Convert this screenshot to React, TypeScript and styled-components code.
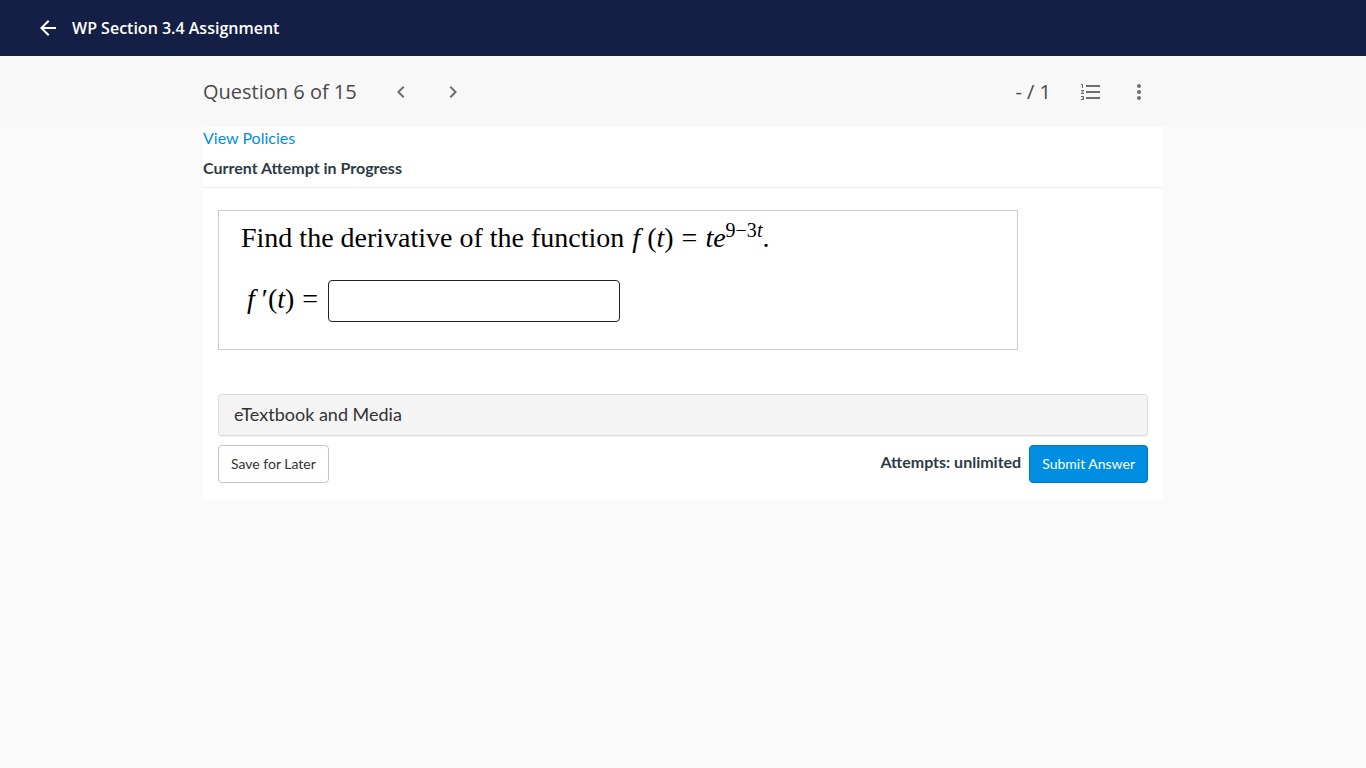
import React from "react";
import styled, { createGlobalStyle } from "styled-components";
import {
  MdArrowBack,
  MdChevronLeft,
  MdChevronRight,
  MdFormatListNumbered,
  MdMoreVert,
} from "react-icons/md";

const GlobalStyle = createGlobalStyle`
  *, *::before, *::after { box-sizing: border-box; }
  body {
    margin: 0;
    background: #fafafa;
    color: #2d3b45;
    font-family: Lato, "Liberation Sans", sans-serif;
    font-size: 16px;
    line-height: 24px;
  }
`;

const TopBar = styled.header`
  display: flex;
  align-items: center;
  gap: 12px;
  height: 56px;
  padding: 0 36px;
  background: #141f45;
  color: #fff;
`;

const Title = styled.h1`
  margin: 0;
  font: 600 16px/24px "Open Sans", sans-serif;
`;

const IconButton = styled.button`
  display: flex;
  padding: 0;
  border: 0;
  background: none;
  color: inherit;
  font-size: 24px;
  cursor: pointer;
`;

const Toolbar = styled.div`
  background: #f8f8f8;
`;

const ToolbarInner = styled.div`
  display: flex;
  align-items: center;
  justify-content: space-between;
  max-width: 960px;
  height: 71px;
  margin: 0 auto;
  padding-right: 12px;
  color: #6e6e6e;
`;

const Group = styled.div<{ $gap: number }>`
  display: flex;
  align-items: center;
  gap: ${(p) => p.$gap}px;
`;

const ToolbarText = styled.span`
  color: #4a4a4a;
  font: 400 20px/28px "Open Sans", sans-serif;
`;

const Pager = styled.nav`
  display: flex;
  gap: 28px;
`;

const Card = styled.main`
  max-width: 960px;
  margin: 0 auto;
  padding-bottom: 17px;
  background: #fff;
`;

const PolicyLink = styled.a`
  display: block;
  width: fit-content;
  color: #008ee2;
  line-height: 22px;
  text-decoration: none;
`;

const AttemptHeading = styled.h2`
  margin: 0;
  padding: 7px 0;
  border-bottom: 1px solid #ebedee;
  font-size: 16px;
  font-weight: 700;
  line-height: 24px;
`;

const Body = styled.div`
  padding: 22px 15px 0;
`;

const Problem = styled.section`
  max-width: 800px;
  min-height: 140px;
  padding: 9px 22px;
  border: 1px solid #ccc;
  color: #000;
  font: 400 28px/36px "Liberation Serif", serif;
`;

const Statement = styled.p`
  display: flex;
  flex-wrap: wrap;
  column-gap: 8px;
  margin: 0;
`;

const Exponent = styled.sup`
  font-size: 20px;
  line-height: 20px;
`;

const AnswerRow = styled.div`
  display: flex;
  align-items: center;
  gap: 10px;
  margin-top: 24px;
  padding-left: 6px;
`;

const AnswerLabel = styled.label`
  display: flex;
  gap: 8px;
  padding-bottom: 4px;
`;

const AnswerInput = styled.input`
  width: 292px;
  height: 42px;
  padding: 0 8px;
  border: 1px solid #222;
  border-radius: 4px;
  background: #fff;
  font: inherit;
`;

const MediaButton = styled.button`
  display: block;
  width: 100%;
  height: 42px;
  margin-top: 44px;
  padding: 0 15px 3px;
  border: 1px solid #ddd;
  border-radius: 3px;
  background: #f4f4f4;
  box-shadow: 0 1px 1px rgba(0, 0, 0, 0.06);
  color: #333;
  font: 400 18px/24px Lato, sans-serif;
  text-align: left;
  cursor: pointer;
`;

const Actions = styled.div`
  display: flex;
  align-items: center;
  justify-content: space-between;
  margin-top: 9px;
`;

const ActionButton = styled.button<{ $primary?: boolean }>`
  height: 38px;
  padding: 0 12px;
  border: 1px solid ${(p) => (p.$primary ? "#0079c1" : "#c4c4c4")};
  border-radius: 4px;
  background: ${(p) => (p.$primary ? "#008ee2" : "#fff")};
  color: ${(p) => (p.$primary ? "#fff" : "#333")};
  font: 400 14px/20px Lato, sans-serif;
  cursor: pointer;
`;

const Attempts = styled.strong`
  padding-bottom: 4px;
  font-weight: 700;
`;

export default function App() {
  return (
    <>
      <GlobalStyle />
      <TopBar>
        <IconButton type="button" aria-label="Back">
          <MdArrowBack />
        </IconButton>
        <Title>WP Section 3.4 Assignment</Title>
      </TopBar>
      <Toolbar>
        <ToolbarInner>
          <Group $gap={32}>
            <ToolbarText>Question 6 of 15</ToolbarText>
            <Pager aria-label="Questions">
              <IconButton type="button" aria-label="Previous question">
                <MdChevronLeft />
              </IconButton>
              <IconButton type="button" aria-label="Next question">
                <MdChevronRight />
              </IconButton>
            </Pager>
          </Group>
          <Group $gap={28}>
            <ToolbarText>- / 1</ToolbarText>
            <Group $gap={24}>
              <IconButton type="button" aria-label="Question list">
                <MdFormatListNumbered />
              </IconButton>
              <IconButton type="button" aria-label="More options">
                <MdMoreVert />
              </IconButton>
            </Group>
          </Group>
        </ToolbarInner>
      </Toolbar>
      <Card>
        <PolicyLink href="#policies">View Policies</PolicyLink>
        <AttemptHeading>Current Attempt in Progress</AttemptHeading>
        <Body>
          <Problem>
            <Statement>
              <span>Find the derivative of the function</span>
              <span>
                <i>f</i> (<i>t</i>)
              </span>
              <span>=</span>
              <span>
                <i>te</i>
                <Exponent>
                  9−3<i>t</i>
                </Exponent>
                .
              </span>
            </Statement>
            <AnswerRow>
              <AnswerLabel htmlFor="answer">
                <span>
                  <i>f</i> ′(<i>t</i>)
                </span>
                <span>=</span>
              </AnswerLabel>
              <AnswerInput id="answer" type="text" autoComplete="off" />
            </AnswerRow>
          </Problem>
          <MediaButton type="button">eTextbook and Media</MediaButton>
          <Actions>
            <ActionButton type="button">Save for Later</ActionButton>
            <Group $gap={8}>
              <Attempts>Attempts: unlimited</Attempts>
              <ActionButton type="submit" $primary>
                Submit Answer
              </ActionButton>
            </Group>
          </Actions>
        </Body>
      </Card>
    </>
  );
}
